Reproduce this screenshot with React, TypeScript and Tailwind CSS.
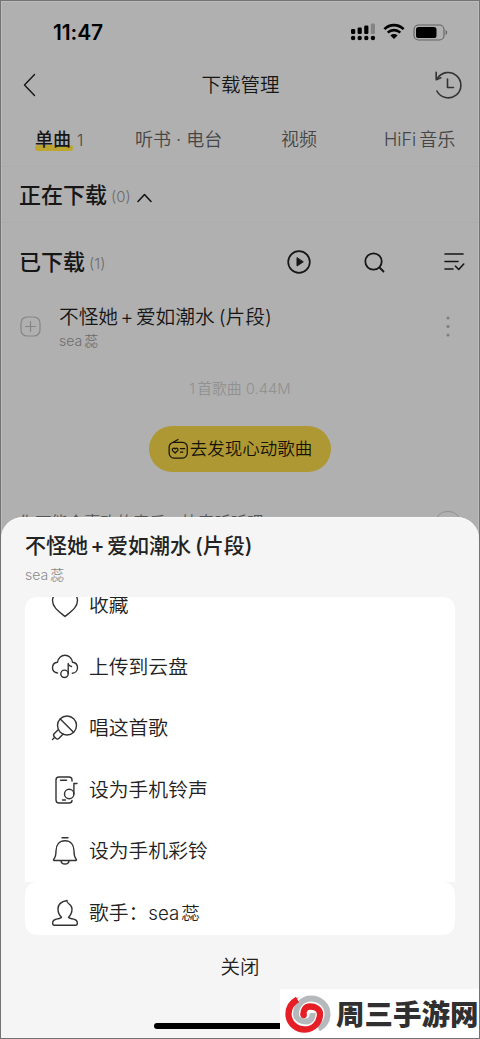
import type { ReactNode } from 'react';

const stroke = {
  fill: 'none',
  stroke: 'currentColor',
  strokeLinecap: 'round',
  strokeLinejoin: 'round',
} as const;

function Status() {
  return (
    <div className="flex h-[62px] items-center pl-[52px] pr-[31px] text-black">
      <span className="text-[21px] font-semibold leading-none tracking-[-0.1px]">11:47</span>
      <div className="ml-auto flex items-center">
        <svg width="26" height="18" viewBox="0 0 26 18" fill="currentColor">
          <rect x="1" y="6" width="4.2" height="5" rx="1.2" />
          <rect x="7.6" y="4.5" width="4.2" height="6.5" rx="1.2" />
          <rect x="14.2" y="2.5" width="4.2" height="8.5" rx="1.2" />
          <rect x="20.8" y="0.5" width="4.2" height="10.5" rx="1.2" opacity="0.25" />
          <circle cx="3.1" cy="15" r="2.2" />
          <circle cx="9.7" cy="15" r="2.2" />
          <circle cx="16.3" cy="15" r="2.2" />
          <circle cx="22.9" cy="15" r="2.2" />
        </svg>
        <svg className="mb-px ml-[7px]" width="22" height="17" viewBox="0 0 22 17">
          <path d="M1.4 6.1C6.8.9 15.2.9 20.6 6.1" fill="none" stroke="currentColor" strokeWidth="2.7" />
          <path d="M4.7 9.6C8.3 6.3 13.7 6.3 17.3 9.6" fill="none" stroke="currentColor" strokeWidth="2.6" />
          <path d="M7.4 12.4C9.5 10.6 12.5 10.6 14.6 12.4L11 16Z" fill="currentColor" />
        </svg>
        <svg className="ml-[8px]" width="35" height="17" viewBox="0 0 35 17">
          <rect x="1" y="1" width="30" height="15" rx="4.5" fill="none" stroke="#626262" strokeWidth="1.1" />
          <rect x="3" y="3" width="20.5" height="11" rx="2.6" fill="currentColor" />
          <path d="M32.6 6v5c2-.8 2-4.2 0-5Z" fill="#626262" />
        </svg>
      </div>
    </div>
  );
}

function Header() {
  return (
    <div className="flex h-11 items-center justify-between pl-[21px] pr-[16px]">
      <svg width="16" height="26" viewBox="0 0 16 26" {...stroke} strokeWidth="1.4">
        <path d="M12.5 2.5 2.5 13l10 10.5" />
      </svg>
      <h1 className="ml-[9px] mt-[2px] text-[19.5px] leading-none">下载管理</h1>
      <svg className="text-[#333]" width="29" height="30" viewBox="0 0 29 30" {...stroke} strokeWidth="1.6">
        <path d="M3.2 8.800A12.7 12.700 0 1 1 2.900 21" />
        <path d="M2.200 2.300v7.400l4.600-1.900" />
        <path d="M13.500 9v8.500h6" />
      </svg>
    </div>
  );
}

function Tabs() {
  return (
    <div className="flex h-[60px] items-center border-b border-[#adadad] pl-[34px] pt-[6px] text-[18px] leading-none text-[#454545]">
      <div className="relative isolate w-[100px] whitespace-nowrap">
        <span className="absolute -bottom-[2px] left-0 -z-10 h-[6px] w-[38px] rounded-full bg-[#bda531]" />
        <b className="font-medium text-[#161616]">单曲</b>
        <span className="ml-[6px] text-[16px]">1</span>
      </div>
      <span className="w-[146px]">听书 · 电台</span>
      <span className="w-[103px]">视频</span>
      <span className="whitespace-nowrap">
        HiFi<span className="ml-[3px]">音乐</span>
      </span>
    </div>
  );
}

function Section({ title, count, children }: { title: string; count: number; children: ReactNode }) {
  return (
    <>
      <h2 className="text-[22px] font-medium leading-none text-[#161616]">{title}</h2>
      <span className="ml-[4px] mt-[3px] text-[15px] leading-none text-[#6c6c6c]">({count})</span>
      {children}
    </>
  );
}

function SongName() {
  return (
    <>
      不怪她<span className="mx-[2.5px]">+</span>爱如潮水<span className="ml-[4px]">(</span>片段<span>)</span>
    </>
  );
}

function Artist() {
  return (
    <>
      sea<span className="ml-[2px]">蕊</span>
    </>
  );
}

function Downloads() {
  return (
    <main>
      <div className="flex h-14 items-center border-b border-[#adadad] pl-[18px]">
        <Section title="正在下载" count={0}>
          <svg className="ml-[6px] mt-[6px]" width="15" height="10" viewBox="0 0 15 10" {...stroke} strokeWidth="1.6">
            <path d="m1 8.5 6.500-7 6.500 7" />
          </svg>
        </Section>
      </div>
      <div className="flex h-[78px] items-center pl-[18px] pr-[14px]">
        <Section title="已下载" count={1}>
          <div className="ml-auto flex items-center text-[#161616]">
            <svg width="24" height="24" viewBox="0 0 24 24" {...stroke} strokeWidth="1.7">
              <circle cx="12" cy="12" r="10.8" />
              <path d="M10 8v8l6-4Z" fill="currentColor" strokeWidth="1" />
            </svg>
            <svg className="ml-[53px]" width="21" height="21" viewBox="0 0 21 21" {...stroke} strokeWidth="1.8">
              <circle cx="9.5" cy="9.5" r="8.2" />
              <path d="m15.500 15.500 4 4" />
            </svg>
            <svg className="ml-[58px]" width="22" height="20" viewBox="0 0 22 20" {...stroke} strokeWidth="1.6">
              <path d="M2 2h18M2 9.500h13M2 17h8M12.500 14.200l3.200 3.300 5-5.500" />
            </svg>
          </div>
        </Section>
      </div>
      <div className="flex h-[54px] items-center pl-[19px] pr-[29px]">
        <svg className="mb-[3px] text-[#858585]" width="21" height="21" viewBox="0 0 21 21" {...stroke} strokeWidth="1.2">
          <rect x="1" y="1" width="19" height="19" rx="6" />
          <path d="M10.500 5.500v10M5.500 10.500h10" />
        </svg>
        <div className="ml-[18px]">
          <p className="text-[19.7px] leading-[26px] text-[#161616]">
            <SongName />
          </p>
          <p className="text-[14px] leading-[22px] text-[#6c6c6c]">
            <Artist />
          </p>
        </div>
        <svg className="mb-[3px] ml-auto text-[#7c7c7c]" width="4" height="21" viewBox="0 0 4 21" fill="currentColor">
          <circle cx="2" cy="2" r="1.5" />
          <circle cx="2" cy="10.5" r="1.5" />
          <circle cx="2" cy="19" r="1.5" />
        </svg>
      </div>
      <p className="mt-[24px] text-center text-[14.8px] leading-[20px] text-[#919191]">
        1<span className="ml-[2px]">首歌曲 0.44M</span>
      </p>
      <button className="mx-auto mt-[27px] flex h-[46px] w-[182px] items-center justify-center rounded-full bg-[#ae9833] font-[350] text-[17.5px] text-[#16140a]">
        <svg className="mr-px" width="21" height="22" viewBox="0 0 22 22" {...stroke} strokeWidth="1.3">
          <rect x="1.200" y="4" width="19" height="16.500" rx="5" />
          <path d="M5.500 4 10.500 1M7.500 15.200l-2.600-2.500c-1.300-2 1.300-3.500 2.600-1.800 1.300-1.700 3.900-.2 2.600 1.800ZM13 10.700h4.500M13 14.200h2.500" />
        </svg>
        去发现心动歌曲
      </button>
      <div className="flex items-start justify-between pl-[18px] pr-[18px] pt-[38px] text-[16.300px] leading-[24px] text-[#555]">
        <span>你可能会喜欢的音乐，快来听听吧</span>
        <span className="mt-px h-[24px] w-[26px] rounded-full border border-[#929292]" />
      </div>
    </main>
  );
}

const actions = [
  {
    label: '收藏',
    icon: (
      <path d="M14 25.500C8 20.500 1.500 16.500 1.500 9.500c0-7 9-9.500 12.500-4.700 3.500-4.800 12.500-2.300 12.500 4.700 0 7-6.500 11-12.500 16Z" />
    ),
  },
  {
    label: '上传到云盘',
    icon: (
      <>
        <path d="M6.500 21C3.500 20.500 1.500 18.500 1.500 15.700c0-3 2.200-5.200 5-5.500.5-4 3.700-7 7.500-7s7 3 7.500 7c2.800.3 5 2.500 5 5.500s-2.300 5.300-5.200 5.500" />
        <circle cx="13.500" cy="21.800" r="3.700" />
        <path d="M17.200 21.500V11.500c.2 2 1.300 2.600 3.300 3" />
      </>
    ),
  },
  {
    label: '唱这首歌',
    icon: (
      <>
        <circle cx="16" cy="11.500" r="9.500" />
        <path d="m9.300 5 13.200 13.200M7.500 15.500 3.300 19.500c-.9 1-.9 2.300 0 3.200l1.500 1.500c.9.900 2.200.900 3.200 0l4.200-4.200M3.500 23.500l-2 2" />
      </>
    ),
  },
  {
    label: '设为手机铃声',
    icon: (
      <>
        <path d="M21 5V4c0-2-1-3-3-3H8C6 1 5 2 5 4v20c0 2 1 3 3 3h10c2 0 3-1 3-2.500M9.500 4.200h6M11.500 24h3" />
        <circle cx="18.200" cy="18" r="4.700" />
        <path d="M22.900 18V7.500H26" />
      </>
    ),
  },
  {
    label: '设为手机彩铃',
    icon: (
      <path d="M11 .8h6M3 23.500c-.7 0-.7-.8-.2-1.300C4.600 20 5 17.700 5 14c0-6.500 3.500-10.300 9-10.300s9 3.800 9 10.300c0 3.700.4 6 2.200 8.200.5.500.5 1.300-.2 1.300ZM10 23.800c.5 4.200 7.500 4.200 8 0" />
    ),
  },
];

function Action({ icon, children }: { icon: ReactNode; children: ReactNode }) {
  return (
    <li className="flex h-[61.6px] shrink-0 items-center pl-[26px] text-[19.800px] text-[#222]">
      <svg className="mr-[10px] shrink-0 text-[#333]" width="28" height="28" viewBox="0 0 28 28" {...stroke} strokeWidth="1.4">
        {icon}
      </svg>
      <span className="whitespace-nowrap pt-[2px] leading-none">{children}</span>
    </li>
  );
}

function Sheet() {
  return (
    <div className="absolute inset-x-0 bottom-0 flex h-[521px] flex-col rounded-t-[22px] bg-[#f5f5f5] px-[24px] shadow-[inset_0_1px_0_#fafafa]">
      <h3 className="mt-[14px] text-[21px] font-medium leading-[30px] text-[#222]">
        <SongName />
      </h3>
      <p className="mt-[4px] text-[14px] leading-[20px] text-[#8a8a8a]">
        <Artist />
      </p>
      <div className="mt-[12px] flex h-[338px] flex-col justify-end overflow-hidden rounded-[12px]">
        <ul className="flex h-[285px] flex-col justify-end overflow-hidden bg-white">
          {actions.map((a) => (
            <Action key={a.label} icon={a.icon}>
              {a.label}
            </Action>
          ))}
        </ul>
        <ul className="h-[53px] rounded-[12px] bg-white">
          <Action
            icon={
              <path d="M10.500 18.200C8 16 7 13.500 7 10c0-4.500 3-7.500 9-8.500-.3 1.500.2 2.300 1.500 3C20 6 21 7.700 21 10c0 3.500-1 6-3.500 8.200 1 1.300 3 1.600 5.500 2 2.500.5 3.500 2 3.300 4.600-.1.900-.6 1.400-1.600 1.400H3.300c-1 0-1.500-.5-1.600-1.400-.2-2.600.8-4.100 3.300-4.600 2.500-.4 4.500-.7 5.500-2Z" />
            }
          >
            歌手：
            <span className="text-[18.700px]">
              <Artist />
            </span>
          </Action>
        </ul>
      </div>
      <button className="mt-[17px] text-[19.500px] leading-[30px] text-[#222]">关闭</button>
      <div className="mx-auto mt-[41px] h-[6px] w-[172px] shrink-0 rounded-full bg-black" />
    </div>
  );
}

// One arm of the swirl, the other is the same shape turned by 180 degrees
const arm = 'M-10.500-14.500C-17-11-19.500-6-19.500 0-19.500 9-12 15.500-3 15.500 6 15.500 12 8 12 0 12-5 7-7.500 2-7.500-3-7.500-5-3-4.500 1';
const tip = 'M-6-19-19-10-13-10C-12-14-10-17-6-19Z';

function SiteMark() {
  return (
    <div className="absolute bottom-0 right-0 flex h-[50px] w-[200px] items-center bg-white pl-[3px]">
      <svg className="shrink-0" width="50" height="40" viewBox="-25 -20 50 40" fill="none">
        <g transform="rotate(180)">
          <path d={arm} stroke="#b5b9bc" strokeWidth="6" />
          <path d={tip} fill="#b5b9bc" />
        </g>
        <path d={arm} stroke="#e61f26" strokeWidth="6.300" />
        <path d={tip} fill="#e61f26" />
        <circle cx="-4.300" cy="1.200" r="3.100" fill="#e61f26" />
      </svg>
      <span className="ml-[3px] whitespace-nowrap pt-[2px] text-[28.500px] font-black leading-none text-[#303030]">周三手游网</span>
    </div>
  );
}

export default function App() {
  return (
    <div className="relative h-[1039px] w-[480px] overflow-hidden border border-[#737373] bg-[#b0b0b0] font-['Inter','Noto_Sans_CJK_SC',sans-serif] font-[350] text-[#161616] shadow-[inset_0_0_0_1px_#bcbcbc]">
      <Status />
      <Header />
      <Tabs />
      <Downloads />
      <Sheet />
      <div className="absolute -bottom-px -right-px">
        <SiteMark />
      </div>
    </div>
  );
}
